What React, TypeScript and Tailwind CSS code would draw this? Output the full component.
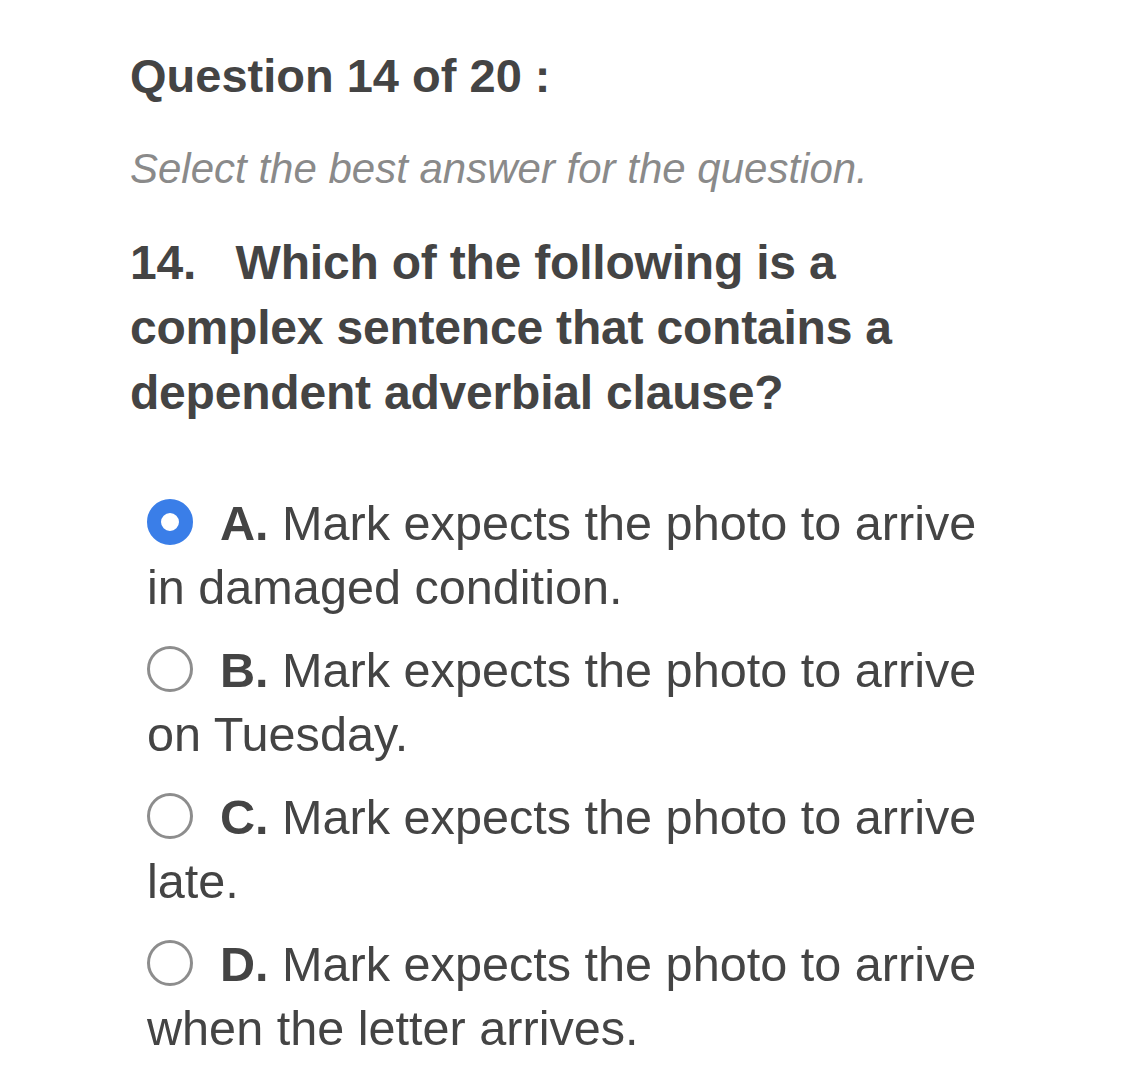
import React from 'react';

interface Option {
  letter: string;
  text: string;
}

const options: Option[] = [
  { letter: 'A.', text: 'Mark expects the photo to arrive in damaged condition.' },
  { letter: 'B.', text: 'Mark expects the photo to arrive on Tuesday.' },
  { letter: 'C.', text: 'Mark expects the photo to arrive late.' },
  { letter: 'D.', text: 'Mark expects the photo to arrive when the letter arrives.' },
];

const Radio: React.FC<{ checked: boolean }> = ({ checked }) => (
  <span
    className={
      checked
        ? 'inline-block w-[46px] h-[46px] rounded-full border-[14px] border-[#3a7ee8] bg-white align-[-5px] mr-[27px]'
        : 'inline-block w-[46px] h-[46px] rounded-full border-[3px] border-[#8d8d8d] bg-white align-[-5px] mr-[27px]'
    }
  />
);

const App: React.FC = () => {
  const selected = 0;

  return (
    <div
      className="min-h-screen bg-white text-[#444444] pl-[130px] pr-[40px] pt-[48px]"
      style={{ fontFamily: '"Liberation Sans", Arial, sans-serif' }}
    >
      <h1 className="text-[47px] leading-[56px] font-bold">Question 14 of 20 :</h1>

      <p className="mt-[40px] text-[42px] leading-[50px] italic text-[#8a8a8a]">
        Select the best answer for the question.
      </p>

      <p className="mt-[36px] w-[800px] text-[48px] leading-[65px] font-bold tracking-[-0.2px]">
        14.&nbsp;&nbsp; Which of the following is a complex sentence that contains a dependent adverbial clause?
      </p>

      <div className="mt-[66px] ml-[17px] w-[860px] flex flex-col gap-[19px]">
        {options.map((opt, i) => (
          <div key={opt.letter} className="text-[48.6px] leading-[64px]">
            <Radio checked={i === selected} />
            <span className="font-bold">{opt.letter}</span> {opt.text}
          </div>
        ))}
      </div>
    </div>
  );
};

export default App;
